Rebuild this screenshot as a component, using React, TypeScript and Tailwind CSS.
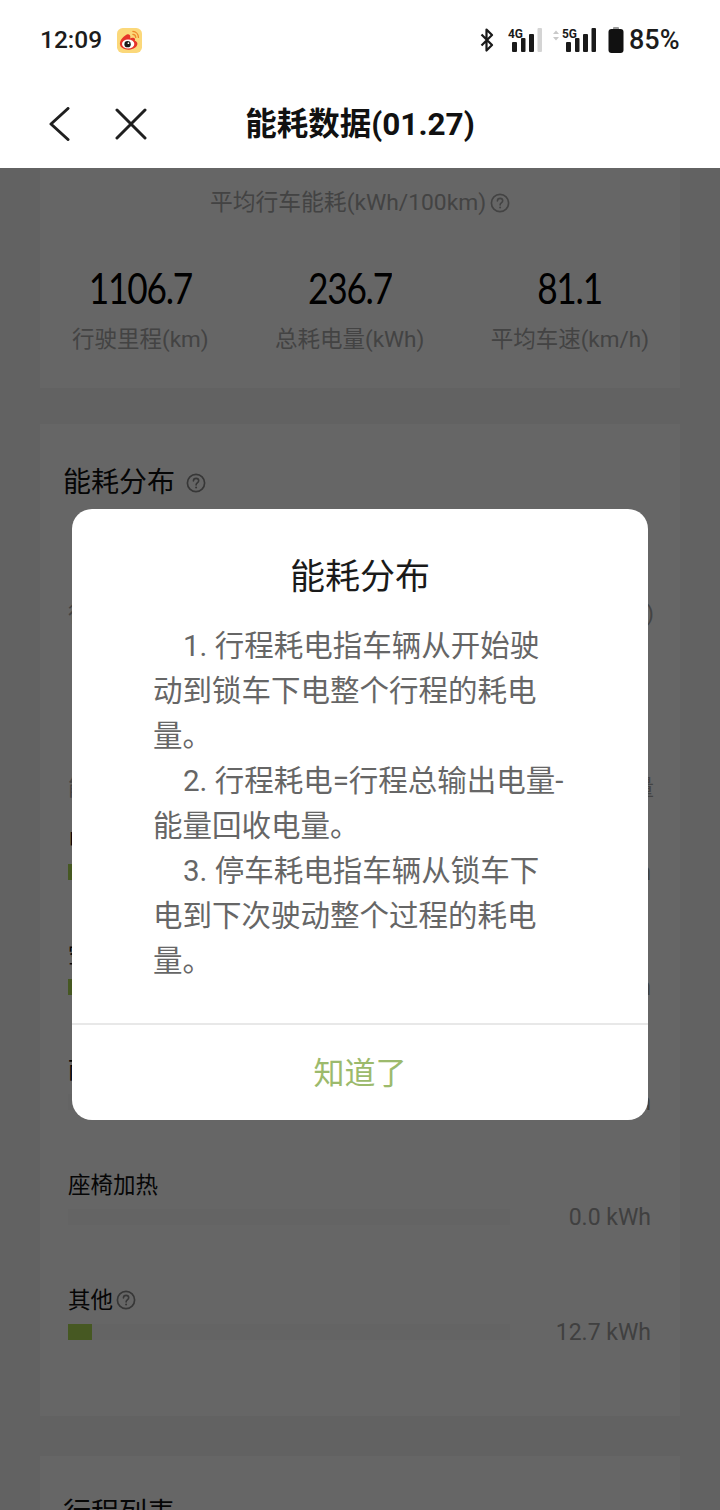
const stats = [
  { value: "1106.7", label: "行驶里程(km)" },
  { value: "236.7", label: "总耗电量(kWh)" },
  { value: "81.1", label: "平均车速(km/h)" },
];

const rows = [
  { name: "电驱系统", value: "180.4 kWh", fill: "w-[190px]", help: false },
  { name: "空调", value: "43.6 kWh", fill: "w-[84px]", help: false },
  { name: "雨刮", value: "0.0 kWh", fill: "w-0", help: false },
  { name: "座椅加热", value: "0.0 kWh", fill: "w-0", help: false },
  { name: "其他", value: "12.7 kWh", fill: "w-[24px]", help: true },
];

function HelpIcon({ className }: { className: string }) {
  return (
    <svg viewBox="0 0 20 20" fill="none" className={className}>
      <circle cx="10" cy="10" r="8.6" stroke="currentColor" strokeWidth="1.7" />
      <path
        d="M7.4 8c0-1.6 1.1-2.6 2.7-2.6s2.6 1 2.6 2.3c0 1.2-.7 1.7-1.5 2.3-.7.5-1.1 1-1.1 1.9"
        stroke="currentColor"
        strokeWidth="1.6"
        strokeLinecap="round"
      />
      <circle cx="10.1" cy="14.4" r="1" fill="currentColor" />
    </svg>
  );
}

function WeiboIcon() {
  return (
    <svg viewBox="0 0 26 26" className="h-[25px] w-[25px]">
      <rect width="26" height="26" rx="6" fill="#fbd87a" />
      <path
        d="M11 6.5c-3.5 1.4-8 5.600-8 9.800 0 3.700 4.400 6.200 9.200 6.200 5 0 9-3 9-6.100 0-2.100-1.700-2.900-2.700-3.200.7-1.700.2-3.300-2.300-3.100-1.100.1-2 .5-2.500.8.400-1.600.2-3-.7-3.900-.5-.5-1.200-.7-2-.5z"
        fill="#e6332a"
      />
      <ellipse cx="11.600" cy="16.600" rx="6.400" ry="4.700" fill="#fff" />
      <circle cx="11" cy="16.800" r="3.300" fill="#1a1a1a" />
      <circle cx="11.900" cy="15.800" r="0.900" fill="#fff" />
      <path d="M16.500 3.500c3 .2 5.700 2.600 5.800 6.300M16.500 6.600c1.700.1 3 1.300 3 3.200" stroke="#ee8a2c" strokeWidth="1.400" fill="none" strokeLinecap="round" />
    </svg>
  );
}

function Signal({ label, lastDim, arrows }: { label: string; lastDim?: boolean; arrows?: boolean }) {
  return (
    <svg viewBox={arrows ? "0 0 46 26" : "12 0 34 26"} className={arrows ? "h-[26px] w-[46px]" : "h-[26px] w-[34px]"}>
      {arrows && <path d="M3 7l3-3.500 3 3.500zM3 10l3 3.500 3-3.500z" fill="#c9c9c9" />}
      <text x="12" y="11" fontSize="13" fontWeight="700" fontFamily="Roboto, sans-serif" fill="#1a1a1a" textLength="15" lengthAdjust="spacingAndGlyphs">
        {label}
      </text>
      <rect x="16" y="15" width="5" height="10" rx="1" fill="#1a1a1a" />
      <rect x="25" y="11" width="4.500" height="14" rx="1" fill="#1a1a1a" />
      <rect x="33" y="7" width="5" height="18" rx="1" fill="#1a1a1a" />
      <rect x="41.500" y="1" width="4.500" height="24" rx="1" fill={lastDim ? "#d4d4d4" : "#1a1a1a"} />
    </svg>
  );
}

function StatusBar() {
  return (
    <div className="flex h-[80px] items-center justify-between px-[40px]">
      <div className="flex items-center gap-[15px]">
        <span className="text-[24.500px] font-medium leading-none text-[#1c1c1c]">12:09</span>
        <WeiboIcon />
      </div>
      <div className="flex items-center">
        <svg viewBox="0 0 14 24" fill="none" className="mr-[14px] h-[24px] w-[14px]">
          <path d="M1.500 6.500l10.500 10.500-5.500 5.500V1.500l5.500 5.500L1.500 17.500" stroke="#1a1a1a" strokeWidth="2.200" strokeLinejoin="round" />
        </svg>
        <Signal label="4G" lastDim />
        <div className="ml-[8px]">
          <Signal label="5G" arrows />
        </div>
        <svg viewBox="0 0 16 26" className="ml-[12px] h-[26px] w-[16px]">
          <rect x="5" y="0" width="6" height="3" rx="1" fill="#9a9a9a" />
          <rect x="0.500" y="2" width="15" height="24" rx="3" fill="#111" />
        </svg>
        <span className="ml-[5px] w-[51px] whitespace-nowrap text-[27px] font-medium leading-none text-[#1c1c1c]">85%</span>
      </div>
    </div>
  );
}

function NavBar() {
  return (
    <div className="grid h-[88px] grid-cols-[1fr_auto_1fr] items-center">
      <div className="flex items-center pl-[48px]">
        <svg viewBox="0 0 22 34" fill="none" className="h-[34px] w-[22px]">
          <path d="M20 1.500L3 17l17 15.500" stroke="#1f1f1f" strokeWidth="3" strokeLinecap="round" strokeLinejoin="round" />
        </svg>
        <svg viewBox="0 0 32 32" fill="none" className="ml-[45px] h-[32px] w-[32px]">
          <path d="M2 2l28 28M30 2L2 30" stroke="#1f1f1f" strokeWidth="3" strokeLinecap="round" />
        </svg>
      </div>
      <h1 className="mt-[2px] text-[31.500px] font-bold leading-none text-[#111]">能耗数据(01.27)</h1>
      <div />
    </div>
  );
}

function Dialog() {
  return (
    <div className="w-[576px] rounded-[20px] bg-white">
      <h2 className="pt-[44px] text-center text-[35px] leading-[50px] text-[#1a1a1a]">能耗分布</h2>
      <div className="px-[81px] pt-[21px] text-[29.500px] leading-[45px] text-[#666]">
        <p className="indent-[30px]">1. 行程耗电指车辆从开始驶动到锁车下电整个行程的耗电量。</p>
        <p className="indent-[30px]">2. 行程耗电=行程总输出电量-能量回收电量。</p>
        <p className="indent-[30px]">3. 停车耗电指车辆从锁车下电到下次驶动整个过程的耗电量。</p>
      </div>
      <div className="mt-[39px] border-t-2 border-[#e8e8e8] pb-[22px] pt-[25px] text-center text-[31px] leading-[48px] text-[#9cba6c]">
        知道了
      </div>
    </div>
  );
}

export default function App() {
  return (
    <div className="relative h-[1510px] w-[720px] overflow-hidden bg-[#f5f5f5] font-[Roboto,'Noto_Sans_CJK_SC',sans-serif]">
      <header className="h-[168px] bg-white">
        <StatusBar />
        <NavBar />
      </header>

      <section className="mx-[40px] h-[220px] bg-white">
        <div className="flex items-center justify-center pt-[20px] text-[22.800px] leading-[30px] text-[#a8a8a8]">
          平均行车能耗(kWh/100km)
          <HelpIcon className="ml-[4px] h-[20px] w-[20px] text-[#a8a8a8]" />
        </div>
        <div className="mt-[47px] flex justify-between pl-[32px] pr-[31px]">
          {stats.map((stat) => (
            <div key={stat.label} className="flex flex-col items-center">
              <div className="scale-x-[0.84] font-['Lato'] text-[42px] leading-[46px] tracking-[-1.500px] text-black">{stat.value}</div>
              <div className="mt-[13px] text-[22.500px] leading-[30px] text-[#a8a8a8]">{stat.label}</div>
            </div>
          ))}
        </div>
      </section>

      <section className="mx-[40px] mt-[36px] h-[992px] bg-white pt-[41px]">
        <div className="flex items-center pl-[23px] text-[28px] leading-[36px] text-[#111]">
          能耗分布
          <HelpIcon className="ml-[11px] h-[20px] w-[20px] text-[#8a8a8a]" />
        </div>
        <div className="mt-[98px] flex justify-between pl-[28px] pr-[26px] text-[22px] leading-[30px] text-[#a8a8a8]">
          <span>行程耗电(kWh)</span>
          <span>停车耗电(kWh)</span>
        </div>
        <div className="mt-[144px] flex justify-between pl-[28px] pr-[26px] text-[22px] leading-[30px] text-[#a8a8a8]">
          <span>能量</span>
          <span>电量</span>
        </div>
        <div className="mt-[22px] flex flex-col gap-[60px] pl-[28px] pr-[29px]">
          {rows.map((row) => (
            <div key={row.name}>
              <div className="flex h-[30px] items-center text-[22.500px] leading-[30px] text-[#111]">
                {row.name}
                {row.help && <HelpIcon className="ml-[3px] h-[20px] w-[20px] text-[#8a8a8a]" />}
              </div>
              <div className="mt-[9px] flex h-[16px] items-center justify-between">
                <div className="h-[16px] w-[442px] bg-[#fafafa]">
                  <div className={`h-full bg-[#b0dc55] ${row.fill}`} />
                </div>
                <span className="mt-[2px] text-[23px] leading-[18px] text-[#a0a0a0]">{row.value}</span>
              </div>
            </div>
          ))}
        </div>
      </section>

      <section className="mx-[40px] mt-[40px] h-[200px] bg-white pl-[23px] pt-[40px] text-[28px] leading-[36px] text-[#111]">
        行程列表
      </section>

      <div className="absolute inset-x-0 bottom-0 top-[168px] flex items-start justify-center bg-black/60 pt-[341px]">
        <Dialog />
      </div>
    </div>
  );
}
